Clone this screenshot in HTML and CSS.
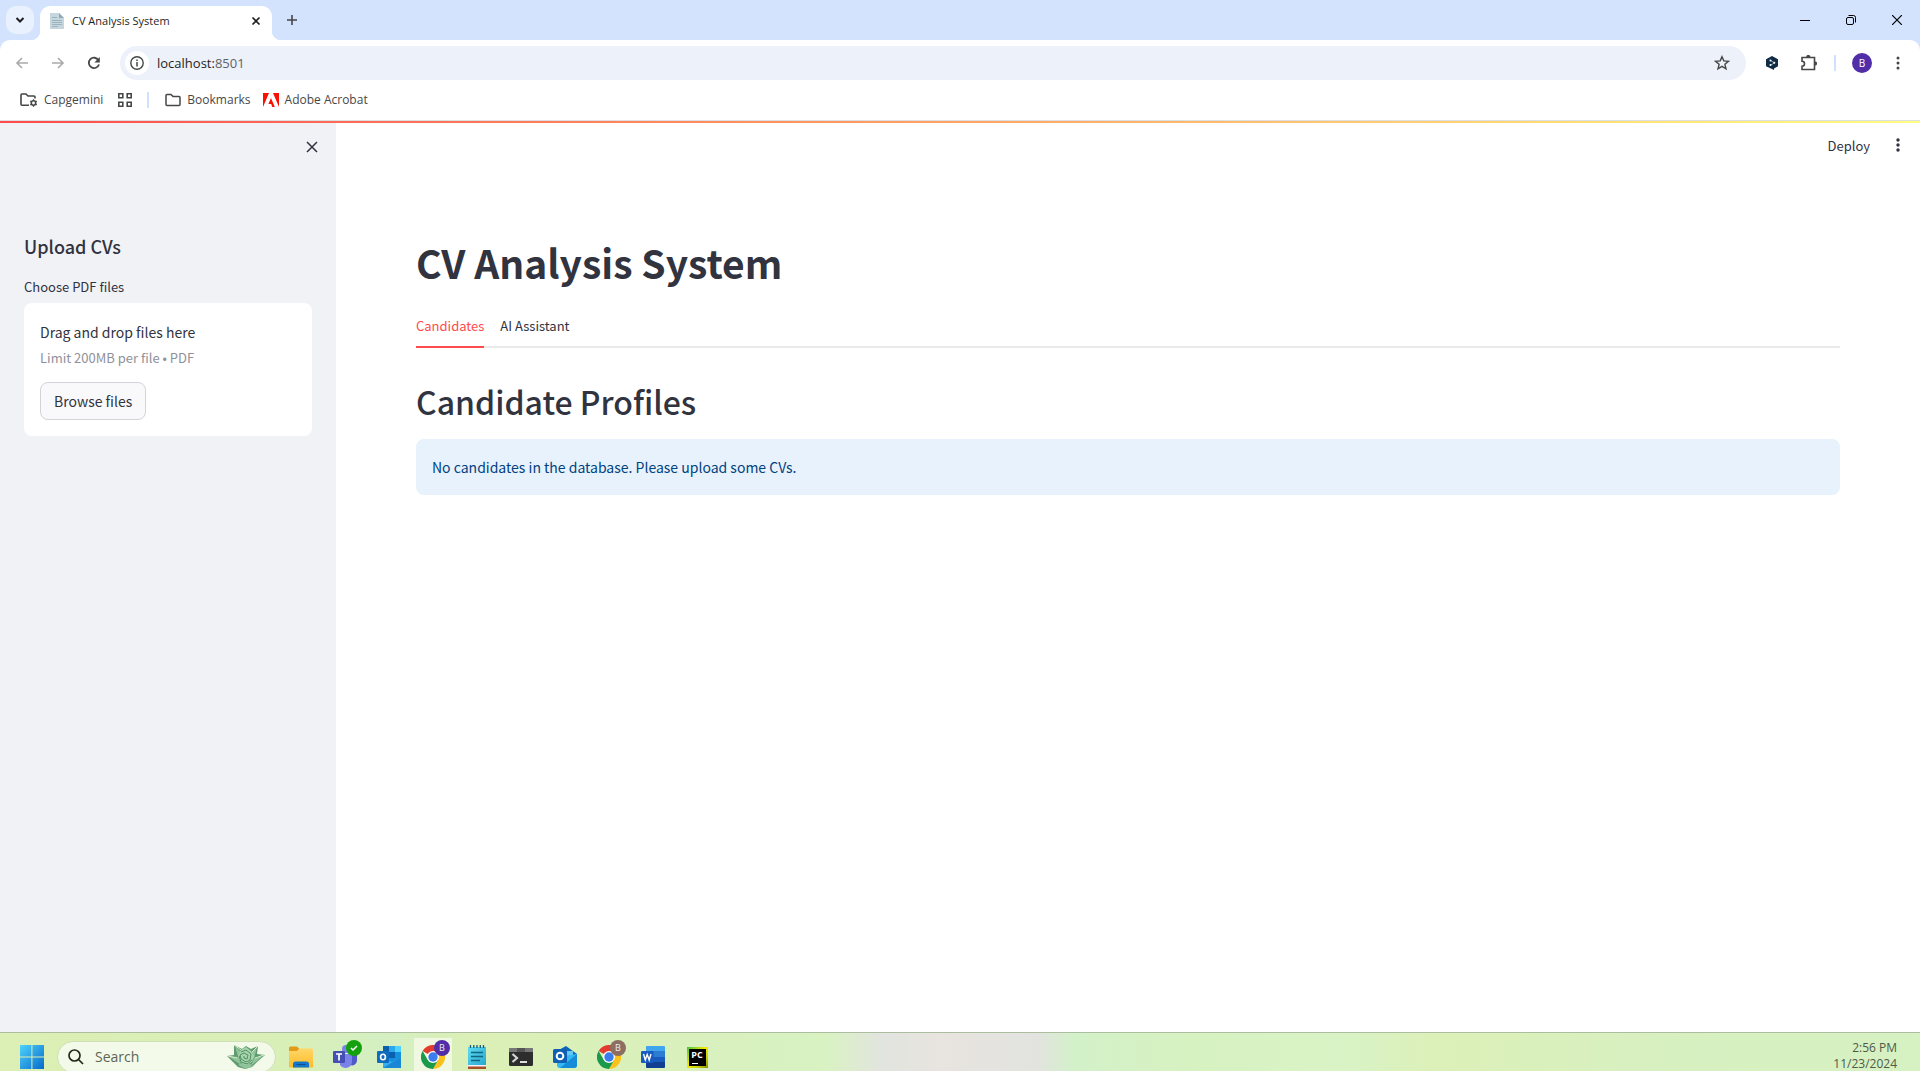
FILE: index.html
```html
<!DOCTYPE html>
<html lang="en">
<head>
<meta charset="utf-8">
<meta name="viewport" content="width=device-width, initial-scale=1">
<title>CV Analysis System</title>
<link rel="stylesheet" href="styles.css">
</head>
<body>
<svg class="defs" aria-hidden="true">
  <defs>
    <linearGradient id="win" x1="0" y1="0" x2="1" y2="1"><stop offset="0" stop-color="#4fd3fb"/><stop offset="1" stop-color="#0669cb"/></linearGradient>
    <linearGradient id="gold" x1="0" y1="0" x2="0" y2="1"><stop offset="0" stop-color="#ffd766"/><stop offset="1" stop-color="#fdbb2c"/></linearGradient>
    <linearGradient id="sky" x1="0" y1="0" x2="1" y2="1"><stop offset="0" stop-color="#5fdcf2"/><stop offset="1" stop-color="#27a7cf"/></linearGradient>
    <symbol id="chrome" viewBox="0 0 24 24">
      <path fill="#e33b2e" d="M12 12 1.6 6A12 12 0 0 1 22.4 6z"/>
      <path fill="#fcc21b" d="M12 12V6h10.4A12 12 0 0 1 12 24l5.2-9z"/>
      <path fill="#1b9a4b" d="M6.8 15 1.6 6A12 12 0 0 0 12 24l5.2-9z"/>
      <circle cx="12" cy="12" r="6" fill="#fff"/><circle cx="12" cy="12" r="4.7" fill="#3b7ded"/>
    </symbol>
  </defs>
</svg>

<header class="browser">
  <div class="tabstrip">
    <button class="tab-search" aria-label="Search tabs"><svg width="12" height="12" viewBox="0 0 12 12"><path d="M2.500 4 6 7.500 9.500 4" fill="none" stroke="#1f1f1f" stroke-width="2"/></svg></button>
    <div class="tab">
      <svg width="14" height="16" viewBox="0 0 14 16"><path fill="#c6d6dd" d="M0 0h9l5 5v11H0z"/><path fill="#8fa9b5" d="M9 0v5h5z"/><path d="M2 4.500h5M2 7.500h10M2 9.500h10M2 11.500h10M2 13.500h6" stroke="#9db3bd"/></svg>
      <span class="tab-title">CV Analysis System</span>
      <button class="plain" aria-label="Close tab"><svg width="10" height="10" viewBox="0 0 10 10"><path d="m1.500 1.500 7 7m0-7-7 7" stroke="#1f1f1f" stroke-width="1.700"/></svg></button>
    </div>
    <button class="plain new-tab" aria-label="New tab"><svg width="12" height="12" viewBox="0 0 12 12"><path d="M6 1v10M1 6h10" stroke="#444746" stroke-width="1.600"/></svg></button>
    <div class="window-buttons">
      <button class="plain" aria-label="Minimize"><svg width="10" height="10" viewBox="0 0 10 10"><path d="M0 5.500h10" stroke="#000"/></svg></button>
      <button class="plain" aria-label="Restore"><svg width="10" height="10" viewBox="0 0 10 10" fill="none" stroke="#000"><rect x=".5" y="2.500" width="7" height="7" rx="1.500"/><path d="M2.500.500H7.500a2 2 0 0 1 2 2v5"/></svg></button>
      <button class="plain" aria-label="Close"><svg width="10" height="10" viewBox="0 0 10 10"><path d="m0 0 10 10M10 0 0 10" stroke="#000" stroke-width="1.200"/></svg></button>
    </div>
  </div>

  <div class="toolbar">
    <div class="nav">
      <button class="plain" aria-label="Back"><svg width="14" height="12" viewBox="0 0 14 12"><path d="M13 6H2M7 1 2 6l5 5" fill="none" stroke="#a9abab" stroke-width="1.600"/></svg></button>
      <button class="plain" aria-label="Forward"><svg width="14" height="12" viewBox="0 0 14 12"><path d="M1 6h11M7 1l5 5-5 5" fill="none" stroke="#a9abab" stroke-width="1.600"/></svg></button>
      <button class="plain" aria-label="Reload"><svg width="14" height="14" viewBox="0 0 14 14"><path d="M11.500 4.200A5.200 5.200 0 1 0 12 8.500" fill="none" stroke="#444746" stroke-width="1.800"/><path fill="#444746" d="M12.800 1v5.400H7.400z"/></svg></button>
    </div>
    <div class="omnibox">
      <button class="plain site-info" aria-label="Site information"><svg width="14" height="14" viewBox="0 0 14 14"><circle cx="7" cy="7" r="6.200" fill="none" stroke="#444746" stroke-width="1.400"/><path d="M7 6v4.500M7 3.400v1.600" stroke="#444746" stroke-width="1.500"/></svg></button>
      <a class="address" href="http://localhost:8501">localhost:<span class="port">8501</span></a>
      <button class="plain" aria-label="Bookmark this page"><svg width="16" height="16" viewBox="0 0 16 16"><path d="m8 1.700 1.800 4.200 4.700.400-3.600 3 1.100 4.500L8 11.400l-4 2.400 1.100-4.500-3.600-3 4.700-.400z" fill="none" stroke="#444746" stroke-width="1.400"/></svg></button>
    </div>
    <div class="extensions">
      <button class="plain" aria-label="DeepL"><svg width="12" height="14" viewBox="0 0 12 14"><path fill="#0f2b46" d="m6 0 6 3.300v7L8 12.500V14l-2.500-1.200L0 10.300v-7z"/><path d="m4.500 4.500 4 2.300-4 2.500" stroke="#cdd6df" fill="none" stroke-width=".7"/><circle cx="4.500" cy="4.500" r="1" fill="#fff"/><circle cx="8.300" cy="6.700" r="1" fill="#fff"/><circle cx="4.500" cy="9" r="1" fill="#fff"/></svg></button>
      <button class="plain" aria-label="Extensions"><svg width="16" height="16" viewBox="0 0 16 16"><path d="M1 2.500h12.500v12H1v-3.200a2.400 2.400 0 0 0 0-5z" fill="none" stroke="#444746" stroke-width="1.600"/><path fill="#444746" d="M5.200 2a2.100 2.100 0 0 1 4.200 0zM14 6.400a2.100 2.100 0 0 1 0 4.200z"/></svg></button>
      <span class="divider"></span>
      <button class="avatar" aria-label="Profile">B</button>
      <button class="plain" aria-label="Browser menu"><svg width="4" height="14" viewBox="0 0 4 14" fill="#444746"><circle cx="2" cy="2" r="1.500"/><circle cx="2" cy="7" r="1.500"/><circle cx="2" cy="12" r="1.500"/></svg></button>
    </div>
  </div>

  <nav class="bookmarks" aria-label="Bookmarks">
    <a href="#capgemini"><svg width="18" height="16" viewBox="0 0 18 16" fill="none" stroke="#444746" stroke-width="1.600"><path d="M9 13.200H2a1 1 0 0 1-1-1V3a1 1 0 0 1 1-1h4l2 2h6a1 1 0 0 1 1 1v1.500"/><circle cx="13.500" cy="11" r="2.200"/><path d="M13.500 7.300v1.500m0 4.400v1.600m-3.200-5.700 1.300.800m3.800 2.200 1.300.800m-6.400 0 1.300-.800m3.800-2.200 1.300-.800" stroke-width="1.300"/></svg>Capgemini</a>
    <a class="grid-link" href="#groups" aria-label="Tab groups"><svg width="14" height="14" viewBox="0 0 14 14" fill="none" stroke="#444746" stroke-width="1.600"><path d="M.8.800h4v4h-4zM9.200.800h4v4h-4zM.8 9.200h4v4h-4zM9.200 9.200h4v4h-4z"/></svg></a>
    <span class="divider"></span>
    <a class="folder-link" href="#bookmarks"><svg width="16" height="14" viewBox="0 0 16 14" fill="none" stroke="#444746" stroke-width="1.500"><path d="M1 11.500v-9a1 1 0 0 1 1-1h4l2 2h6a1 1 0 0 1 1 1v7a1 1 0 0 1-1 1H2a1 1 0 0 1-1-1z"/></svg>Bookmarks</a>
    <a class="adobe-link" href="#acrobat"><svg width="16" height="14" viewBox="0 0 16 14" fill="#fa0f00"><path d="M0 0h6L0 14zM10 0h6v14zM8 5l3.800 9H9.300l-1.100-2.900H5.400z"/></svg>Adobe Acrobat</a>
  </nav>
</header>

<div class="app">
  <div class="decoration"></div>
  <div class="app-body">
    <aside class="sidebar">
      <button class="plain sidebar-close" aria-label="Close sidebar"><svg width="12" height="12" viewBox="0 0 12 12"><path d="m1 1 10 10M11 1 1 11" stroke="#31333f" stroke-width="1.500"/></svg></button>
      <h2 class="side-title">Upload CVs</h2>
      <span class="field-label" id="pdf-label">Choose PDF files</span>
      <section class="dropzone" aria-labelledby="pdf-label">
        <span class="drop-text">Drag and drop files here</span>
        <small class="drop-limit">Limit 200MB per file • PDF</small>
        <button class="browse">Browse files</button>
      </section>
    </aside>
    <main class="main">
      <div class="app-header">
        <button class="plain deploy">Deploy</button>
        <button class="plain" aria-label="App menu"><svg width="4" height="14" viewBox="0 0 4 14" fill="#31333f"><circle cx="2" cy="2" r="1.700"/><circle cx="2" cy="7" r="1.700"/><circle cx="2" cy="12" r="1.700"/></svg></button>
      </div>
      <div class="content">
        <h1 class="title">CV Analysis System</h1>
        <div class="tabs" role="tablist">
          <button class="page-tab active" role="tab" aria-selected="true">Candidates</button>
          <button class="page-tab" role="tab" aria-selected="false">AI Assistant</button>
        </div>
        <h2 class="subtitle">Candidate Profiles</h2>
        <p class="alert">No candidates in the database. Please upload some CVs.</p>
      </div>
    </main>
  </div>
</div>

<footer class="taskbar">
  <button class="task start" aria-label="Start"><svg width="24" height="24" viewBox="0 0 24 24"><path fill="url(#win)" d="M0 0h11.400v11.400H0zM12.400 0H24v11.400H12.400zM0 12.400h11.400V24H0zM12.400 12.400H24V24H12.400z"/></svg></button>
  <label class="search">
    <svg width="16" height="16" viewBox="0 0 16 16" fill="none" stroke="#1f2a1c" stroke-width="1.700"><circle cx="6.500" cy="6.500" r="5.500"/><path d="m10.500 10.500 4.500 4.500"/></svg>
    <input type="text" placeholder="Search" aria-label="Search">
    <svg width="38" height="26" viewBox="0 0 38 26"><path fill="#5f9a70" d="m7 1 8 4 4-3 5 3 7-3-1 8 8 1-8 7-5 5-7 2-7-2-5-5-6-6 7-1z"/><path fill="#8fc39a" d="m8 2 7 7-3 7zM30 3l-6 6 3 6zM1 12l10 1 3 8zM36 12l-9 2-3 8zM11 21l8-4 7 5-7 3z"/><path fill="#a9d4ab" d="m14 6 5-3 5 4 3 5-2 6-6 3-6-3-2-6z"/><path d="m14 8 5-2 5 4-1 6-4 2-5-3-1-4 4-2 4 2-1 4-3-1v-2M12 12l2 6 6 2 5-4" fill="none" stroke="#4c8f66"/><path d="m7 1 7 5M31 2l-6 6M1 12l9 2M37 11l-9 3" stroke="#d4ebc4"/></svg>
  </label>
  <button class="task" aria-label="File Explorer"><svg width="24" height="24" viewBox="0 0 24 24"><path fill="#e29a18" d="M0 3a1.500 1.500 0 0 1 1.500-1.500H8L10.500 4H22v6H0z"/><path fill="url(#gold)" d="M0 6h8l2.500-2.500H22.500A1.500 1.500 0 0 1 24 5v16.500a1 1 0 0 1-1 1H1a1 1 0 0 1-1-1z"/><path fill="#1677c8" d="M4 22.500V19a2.500 2.500 0 0 1 2.500-2.500h11A2.500 2.500 0 0 1 20 19v3.500z"/><path d="M7.500 19.500h9" stroke="#0b4f92"/></svg></button>
  <button class="task" aria-label="Teams"><svg width="24" height="24" viewBox="0 0 24 24"><circle cx="20" cy="6" r="3" fill="#5059c9"/><circle cx="13" cy="4" r="4" fill="#7b83eb"/><path fill="#5059c9" d="M16 9h8v7a5 5 0 0 1-7 4z"/><path fill="#7b83eb" d="M7 9h12v8a6.500 6.500 0 0 1-12 3z"/><rect y="6" width="12" height="12" rx="1" fill="#4550b5"/><path d="M3 9h6M6 9v6.500" stroke="#fff" stroke-width="1.700"/></svg><span class="badge ok"><svg width="8" height="8" viewBox="0 0 8 8"><path d="m1 4 2 2 4-4" fill="none" stroke="#fff" stroke-width="1.500"/></svg></span></button>
  <button class="task" aria-label="Outlook"><svg width="24" height="24" viewBox="0 0 24 24"><path fill="#1490df" d="M6 1h18v22H6z"/><path fill="#0a5fae" d="M6 1h6v6H6zM12 7h6v6h-6z"/><path fill="#28a8ea" d="M12 1h6v6h-6z"/><path fill="#50d0ff" d="M18 1h6v6h-6z"/><path fill="#35b0ee" d="M6 23V13l9 4 9-5v11z"/><path fill="#1a86d6" d="m6 23 18-11v11z"/><rect y="6" width="12" height="12" rx="1" fill="#0f6cbd"/><ellipse cx="6" cy="12" rx="2.400" ry="2.800" fill="none" stroke="#fff" stroke-width="1.600"/></svg></button>
  <button class="task current" aria-label="Chrome, profile B"><svg width="24" height="24"><use href="#chrome"/></svg><span class="badge violet">B</span></button>
  <button class="task" aria-label="Notepad"><svg width="24" height="24" viewBox="0 0 24 24"><path fill="#a94d2a" d="M3 20h18v4H3z"/><path fill="#f4f4f4" d="M3 19h18v2.500H3z"/><path fill="url(#sky)" d="M3 2h18v18H3z"/><path d="M5.500 0v3m3.300-3v3m3.200-3v3m3.300-3v3m3.200-3v3" stroke="#155e78" stroke-width="1.300"/><path d="M6 7.500h12M6 11.500h12M6 15.500h9" stroke="#13667f" stroke-width="1.300"/></svg></button>
  <button class="task" aria-label="Terminal"><svg width="24" height="20" viewBox="0 0 24 20"><rect y="1" width="24" height="18" rx="1.500" fill="#2d2d2d"/><path fill="#777" d="M0 5V2.500A1.500 1.500 0 0 1 1.500 1h21A1.500 1.500 0 0 1 24 2.500V5z"/><path fill="#555" d="M8 1h8v4H8z"/><path d="m3.500 7 4.500 4-4.500 4" fill="none" stroke="#d5d5d5" stroke-width="2.200"/><path d="M11 15h7" stroke="#fff" stroke-width="1.700"/></svg></button>
  <button class="task" aria-label="Outlook (new)"><svg width="24" height="24" viewBox="0 0 24 24"><path fill="#1066b5" d="m4 6 9-5 11 8v6H4z"/><path fill="#64c8f5" d="M7 6h13v9H7z"/><path fill="#35b8f1" d="M4 12v8a3 3 0 0 0 3 3h14a3 3 0 0 0 3-3V9z"/><path fill="#168bd8" d="m24 9-17 14h14a3 3 0 0 0 3-3z"/><rect y="4" width="14" height="14" rx="1.500" fill="#0f5fb4"/><circle cx="7" cy="11" r="3.300" fill="none" stroke="#fff" stroke-width="2"/></svg></button>
  <button class="task" aria-label="Chrome, second profile"><svg width="24" height="24"><use href="#chrome"/></svg><span class="badge brown">B</span></button>
  <button class="task" aria-label="Word"><svg width="24" height="24" viewBox="0 0 24 24"><path fill="#41a5ee" d="M6 1h17a1 1 0 0 1 1 1v5H5V2a1 1 0 0 1 1-1z"/><path fill="#2b7cd3" d="M5 6h19v6H5z"/><path fill="#185abd" d="M5 12h19v5.500H5z"/><path fill="#103f91" d="M5 17h19v5a1 1 0 0 1-1 1H6a1 1 0 0 1-1-1z"/><rect y="6" width="12.500" height="12" rx="1" fill="#185abd"/><path d="m2.500 9 1.800 6L6.200 9.500 8.200 15 10 9" fill="none" stroke="#fff" stroke-width="1.400"/></svg></button>
  <button class="task" aria-label="PyCharm"><span class="pc"><span class="pc-tile">PC</span></span></button>
  <div class="clock"><span>2:56 PM</span><span>11/23/2024</span></div>
</footer>
</body>
</html>
```
FILE: styles.css
```css
* { box-sizing: border-box; }

body {
  margin: 0;
  height: 100vh;
  display: flex;
  flex-direction: column;
  overflow: hidden;
  background: #fff;
  color: #31333f;
  font-family: "Noto Sans CJK JP", "Noto Sans", sans-serif;
}

svg { display: block; flex: none; }
.defs { position: absolute; width: 0; height: 0; }
a { color: inherit; text-decoration: none; }
button { font: inherit; color: inherit; cursor: pointer; }

.plain {
  display: flex;
  align-items: center;
  justify-content: center;
  padding: 0;
  border: 0;
  background: none;
}

/* Browser chrome */
.browser {
  flex: none;
  background: #d3e3fd;
  border-bottom: 1px solid #dcdfe3;
  color: #1f1f1f;
  font: 12px/16px "Open Sans", "Noto Sans", sans-serif;
}

.tabstrip {
  display: flex;
  align-items: center;
  height: 40px;
  padding-left: 6px;
}

.tab-search {
  display: flex;
  align-items: center;
  justify-content: center;
  width: 28px;
  height: 28px;
  padding: 0;
  border: 0;
  border-radius: 10px;
  background: #e9f0fe;
}

.tab {
  position: relative;
  align-self: flex-end;
  display: flex;
  align-items: center;
  gap: 8px;
  width: 232px;
  height: 34px;
  margin-left: 6px;
  padding: 0 11px 4px 10px;
  border-radius: 10px 10px 0 0;
  background: #fff;
}

.tab::before,
.tab::after {
  content: "";
  position: absolute;
  bottom: 0;
  width: 10px;
  height: 10px;
}
.tab::before { right: 100%; background: radial-gradient(circle at 0 0, transparent 10px, #fff 11px); }
.tab::after { left: 100%; background: radial-gradient(circle at 100% 0, transparent 10px, #fff 11px); }

.tab-title { flex: 1; font-size: 11px; }
.new-tab { width: 28px; height: 28px; margin-left: 6px; }

.window-buttons { display: flex; margin-left: auto; }
.window-buttons .plain { width: 46px; height: 40px; }

.toolbar {
  display: flex;
  align-items: center;
  height: 46px;
  padding: 0 20px 0 15px;
  border-radius: 10px 10px 0 0;
  background: #fff;
}

.nav { display: flex; gap: 22px; width: 105px; }

.omnibox {
  flex: 1;
  display: flex;
  align-items: center;
  height: 34px;
  padding: 0 16px 0 5px;
  border-radius: 17px;
  background: #edf1fa;
}

.site-info { width: 24px; height: 24px; border-radius: 12px; background: #fff; }
.address { flex: 1; margin-left: 8px; font-size: 13px; }
.port { color: #5f6368; }

.extensions { display: flex; align-items: center; margin-left: 20px; }
.extensions .plain + .plain { margin-left: 23px; }

.divider { width: 2px; height: 16px; background: #cfe1fd; }
.extensions .divider { margin: 0 16px 0 17px; }

.avatar {
  width: 20px;
  height: 20px;
  margin-right: 24px;
  padding: 0;
  border: 0;
  border-radius: 50%;
  background: #512da8;
  color: #fff;
  font-size: 10px;
  line-height: 20px;
}

.bookmarks {
  display: flex;
  align-items: center;
  height: 34px;
  padding: 0 20px 6px;
  background: #fff;
  color: #474747;
  font-size: 12px;
}
.bookmarks a { display: flex; align-items: center; gap: 6px; }
.bookmarks .grid-link { margin: 0 15px; }
.bookmarks .folder-link { margin: 0 12px 0 16px; }

/* Application */
.app { flex: 1; min-height: 0; display: flex; flex-direction: column; }
.decoration { flex: none; height: 2px; background: linear-gradient(90deg, #ff4b4b, #fffd80); }
.app-body { flex: 1; min-height: 0; display: flex; }

.sidebar {
  flex: none;
  display: flex;
  flex-direction: column;
  width: 336px;
  padding: 12px 24px;
  background: #f0f2f6;
}

.sidebar-close { align-self: flex-end; width: 24px; height: 24px; margin-right: -12px; }

.side-title {
  margin: 75px 0 0;
  font-size: 18px;
  line-height: 24px;
  font-weight: 500;
}

.field-label { margin: 19px 0 6px; font-size: 13px; line-height: 20px; }

.dropzone {
  display: flex;
  flex-direction: column;
  align-items: flex-start;
  padding: 16px;
  border-radius: 8px;
  background: #fff;
}
.drop-text { font-size: 14px; line-height: 26px; }
.drop-limit { font-size: 13px; line-height: 22px; color: #8f919a; margin: 2px 0 13px; }

.browse {
  height: 38px;
  padding: 0 13px;
  border: 1px solid #d3d4d8;
  border-radius: 8px;
  background: #f9f9fb;
  font-size: 14px;
}

.main { flex: 1; min-width: 0; }

.app-header {
  display: flex;
  align-items: center;
  justify-content: flex-end;
  gap: 26px;
  height: 44px;
  padding-right: 20px;
}
.deploy { font-size: 13px; }

.content { padding: 62px 80px 0; }

.title { margin: 0; font-size: 39px; line-height: 66px; font-weight: 700; }

.tabs {
  display: flex;
  gap: 16px;
  margin-top: 11px;
  border-bottom: 2px solid #e9eaec;
}
.page-tab {
  height: 42px;
  margin-bottom: -2px;
  padding: 0 0 2px;
  border: 0;
  border-bottom: 2px solid transparent;
  background: none;
  font-size: 13px;
}
.page-tab.active { color: #ff4b4b; border-bottom-color: #ff4b4b; }

.subtitle { margin: 29px 0 14px; font-size: 32px; line-height: 48px; font-weight: 500; }

.alert {
  margin: 0;
  padding: 16px;
  border-radius: 8px;
  background: #e8f2fc;
  color: #004280;
  font-size: 14px;
  line-height: 24px;
}

/* Taskbar: sits partly below the window's lower edge */
.taskbar {
  flex: none;
  display: flex;
  align-items: flex-start;
  height: 39px;
  padding: 0 23px 0 10px;
  border-top: 1px solid #adbd9f;
  background: linear-gradient(90deg, #dcefb4 0%, #d9efb8 15%, #d4efc2 20%, #dcf0b6 25%, #d8f1c0 40%, #d9f2c2 43%, #e2e4df 46%, #e8e4df 49%, #e2e3df 54%, #d3f1c9 56%, #d7f2c1 62%, #d9f3c6 70%, #dcf0b8 75%, #d8f0c0 85%, #d6f1c2 100%);
  font-family: "Open Sans", "Noto Sans", sans-serif;
}

.task {
  position: relative;
  display: flex;
  align-items: center;
  justify-content: center;
  flex: none;
  width: 44px;
  height: 48px;
  padding: 0;
  border: 0;
  background: none;
}

.search {
  display: flex;
  align-items: center;
  gap: 11px;
  width: 219px;
  height: 32px;
  margin: 8px 3px 0;
  padding: 0 10px;
  border-radius: 16px;
  border: 1px solid #cfe0b8;
  background: #f4faea;
}
.search input {
  flex: 1;
  min-width: 0;
  padding: 0;
  border: 0;
  background: none;
  font: 14px/20px "Open Sans", "Noto Sans", sans-serif;
}
.search input::placeholder { color: #5c6555; opacity: 1; }

.current { background: linear-gradient(#f1f8e2, #f1f8e2) 50% 100% / 38px 43px no-repeat; }

.badge {
  position: absolute;
  top: 7px;
  right: 5px;
  display: flex;
  align-items: center;
  justify-content: center;
  width: 16px;
  height: 16px;
  border-radius: 50%;
  color: #eee;
  font-size: 9px;
  line-height: 16px;
}
.ok { background: #13a10e; }
.violet { background: #512da8; }
.brown { background: #8d6e63; }

.pc {
  padding: 2px;
  background: linear-gradient(135deg, #3fc44a, #f5e800 45%, #c9d800 70%, #8a8a10);
}
.pc-tile {
  display: block;
  width: 17px;
  height: 17px;
  background: #000;
  color: #fff;
  font-size: 9px;
  line-height: 11px;
  font-weight: 700;
}
.pc-tile::after {
  content: "";
  display: block;
  width: 6px;
  height: 1px;
  margin: 3px 0 0 3px;
  background: #fff;
}

.clock {
  display: flex;
  flex-direction: column;
  margin: 7px 0 0 auto;
  color: #4f5a4a;
  font-size: 12px;
  line-height: 16px;
  text-align: right;
}
```
